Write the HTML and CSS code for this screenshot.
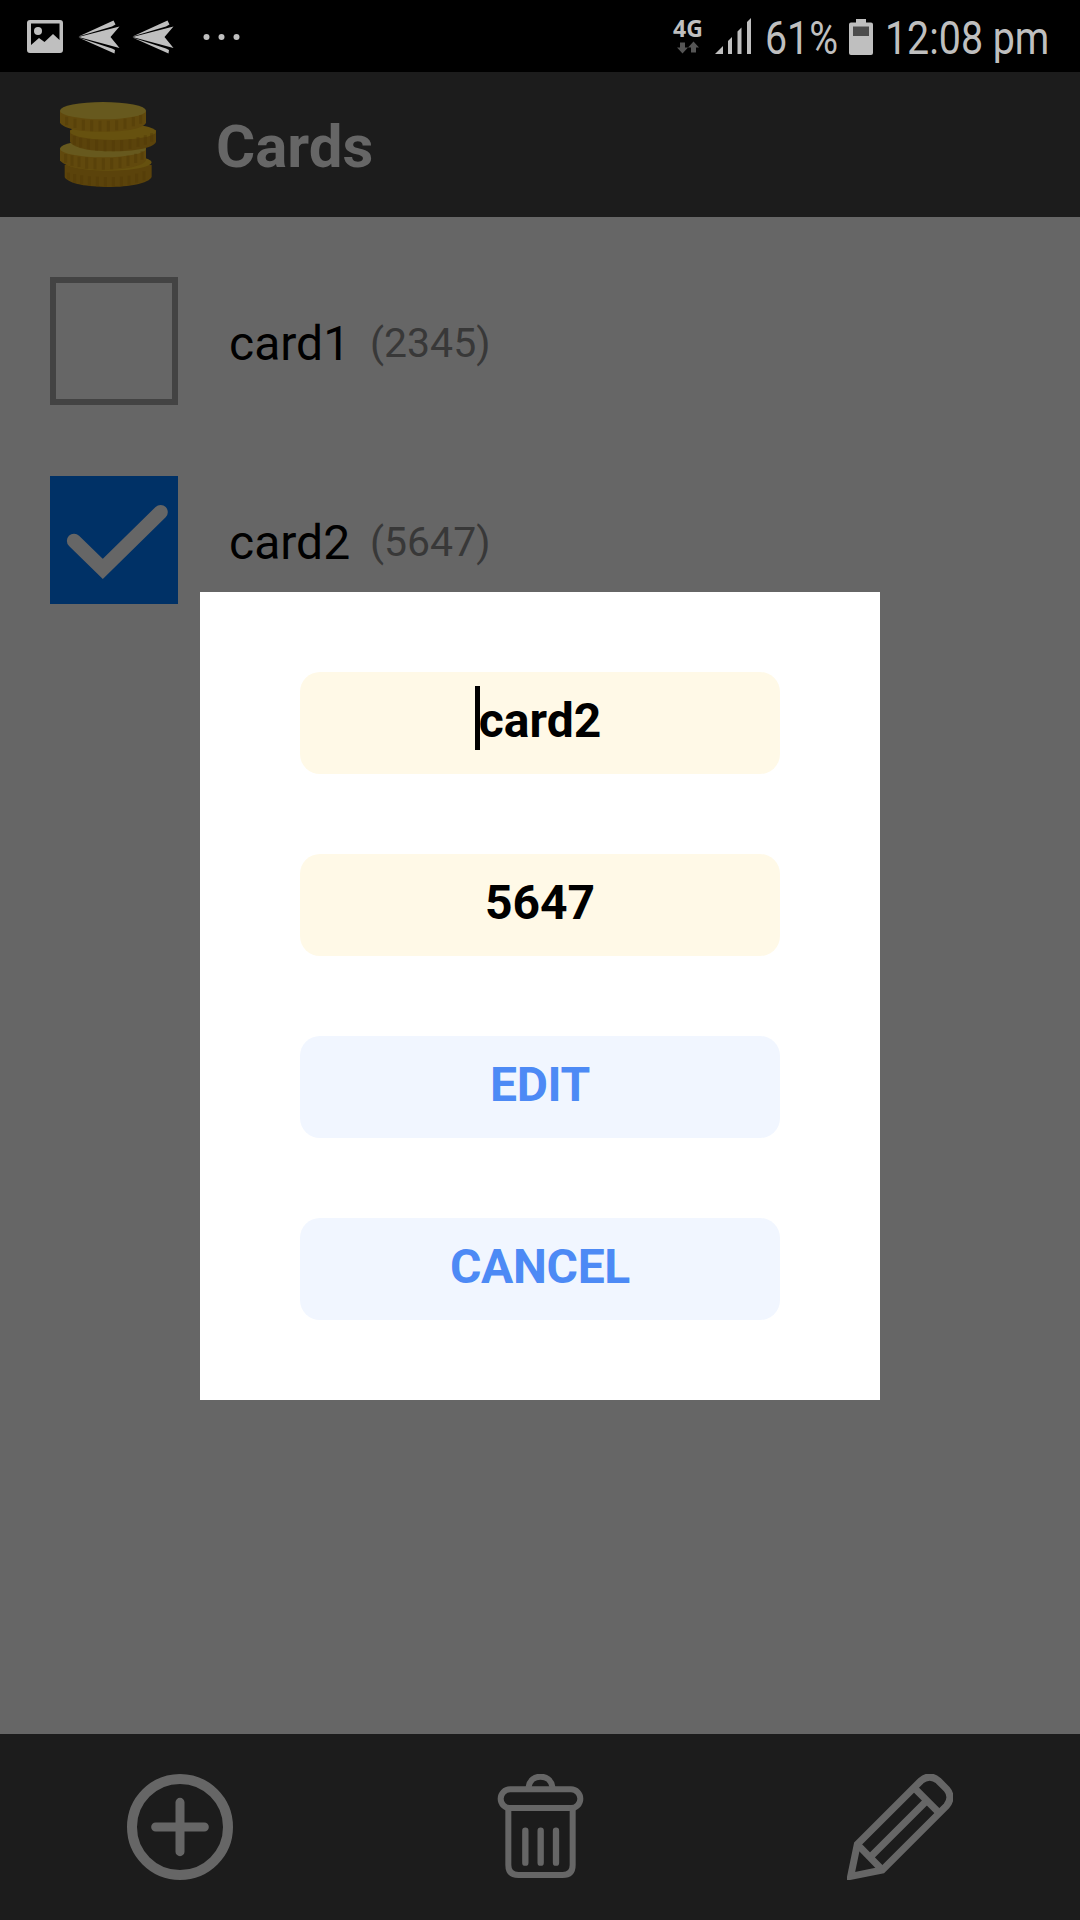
FILE: index.html
```html
<!DOCTYPE html>
<html lang="en">
<head>
<meta charset="utf-8">
<title>Cards</title>
<link rel="stylesheet" href="styles.css">
</head>
<body>
<div class="screen">
  <div class="status">
    <div class="status-left">
      <svg class="notices" viewBox="0 0 240 72">
        <path fill-rule="evenodd" d="M30 20h30q3 0 3 3v27q0 3-3 3H30q-3 0-3-3V23q0-3 3-3zM31 23.500V45l8-7 5.500 4 8.500-8 6.500 6V23.500z"/>
        <circle cx="38" cy="31" r="4"/>
        <g id="plane">
          <path d="M78.500 36.500L113.500 20.500L115.500 24.500L112 26.500z"/>
          <path d="M78.500 37L119.500 26.500L110.500 37L119.500 48L112 46z"/>
          <path d="M78.500 37.500L112 48.500L115 50L114.500 53.500z"/>
        </g>
        <use href="#plane" x="54"/>
        <circle cx="206.500" cy="37" r="3"/><circle cx="221.500" cy="37" r="3"/><circle cx="236.500" cy="37" r="3"/>
      </svg>
    </div>
    <div class="status-right">
      <div class="network">
        <span class="network-type">4G</span>
        <svg class="arrows" viewBox="0 0 22 12"><path d="M3 1h5v5h3L5.500 12L0 6h3zM14 11h5V6h3L16.500 0L11 6h3z"/></svg>
      </div>
      <svg class="signal" viewBox="0 0 36 36"><path d="M0 36l8-8v8zM13 36V23l4-4v17zM22.500 36V13.500l4-4V36zM32 36V4l4-4v36z"/></svg>
      <span class="percent"><span class="narrow">61%</span></span>
      <svg class="battery" viewBox="0 0 24 36"><path d="M7 0h10v3.500h5q2 0 2 2V34q0 2-2 2H2q-2 0-2-2V5.500q0-2 2-2h5z"/><path class="battery-empty" d="M4 7.500h16V17H4z"/></svg>
      <span class="clock"><span class="narrow">12:08 pm</span></span>
    </div>
  </div>

  <header class="header">
    <svg class="coins" viewBox="60 66 288 255">
      <path class="edge-low" d="M74 255v37c12 20 68 29 131 29s120-10 130-30v-36z"/>
      <ellipse class="face-low" cx="205" cy="247" rx="130" ry="25"/>
      <path class="ridge" d="M85 278v20M104 282v26M125 286v27M148 289v29M172 290v30M196 291v30M220 291v30M244 290v28M267 287v27M290 281v27M312 274v27"/>
      <path class="edge-high" d="M60 205v36c12 20 68 29 129 29s120-10 129-29v-36z"/>
      <ellipse class="face-high" cx="189" cy="206" rx="129" ry="26"/>
      <path class="ridge" d="M77 222v26M96 226v31M117 230v31M140 232v34M165 234v34M190 235v34M215 234v34M240 232v32M264 227v31M287 221v28M306 214v25"/>
      <path class="edge-low" d="M90 150v36c12 20 68 28 129 28s120-9 129-28v-36z"/>
      <ellipse class="face-low" cx="219" cy="155" rx="129" ry="25"/>
      <path class="ridge" d="M103 168v26M122 174v28M145 177v31M170 179v33M195 181v33M220 181v33M245 180v33M270 177v30M294 171v29M316 166v28M335 160v25"/>
      <path class="edge-high" d="M60 92v36c12 20 68 27 129 27s120-8 129-27V92z"/>
      <ellipse class="face-high" cx="189" cy="92" rx="129" ry="26"/>
      <path class="ridge" d="M80 110v26M105 116v28M130 119v32M155 121v33M180 122v32M205 122v32M230 121v30M255 116v30M280 111v28M302 105v26"/>
    </svg>
    <h1 class="title">Cards</h1>
  </header>

  <main class="list">
    <div class="row">
      <span class="box"></span>
      <span class="name">card1</span>
      <span class="digits">(2345)</span>
    </div>
    <div class="row">
      <span class="box checked"><svg class="tick" viewBox="62 650 383 383"><path d="M134 844L220 928L393 758"/></svg></span>
      <span class="name">card2</span>
      <span class="digits">(5647)</span>
    </div>
  </main>

  <footer class="toolbar">
    <svg class="tool" viewBox="81 162 318 318"><g stroke-width="30"><circle cx="240" cy="321" r="144"/><path stroke-width="27" d="M167 321h146M240 247v148"/></g></svg>
    <svg class="tool" viewBox="81 162 318 318"><g stroke-width="18"><path d="M206 200c6-40 65-40 71 0"/><rect x="122" y="208" width="239" height="56" rx="28"/><path d="M145 264v171q0 30 30 30h133q30 0 30-30V264"/><path stroke-width="19" d="M196 332v96M242 332v96M288 332v96"/></g></svg>
    <svg class="tool" viewBox="81 162 318 318"><g class="mitre" stroke-width="21"><path d="M112 373L303 182Q329 160 355 182L380 207Q400 231 380 257L187 450L92 469z"/><path d="M112 373L187 450M151 411L320 242M283 204L357 278"/></g></svg>
  </footer>

  <div class="overlay">
    <div class="dialog">
      <div class="field"><span class="value">card2<i class="caret"></i></span></div>
      <div class="field">5647</div>
      <div class="field action">EDIT</div>
      <div class="field action">CANCEL</div>
    </div>
  </div>
</div>
</body>
</html>
```
FILE: styles.css
```css
* { box-sizing: border-box; }
body { margin: 0; background: #666; font-family: Roboto, sans-serif; }
svg { display: block; flex: none; }

.screen {
  position: relative;
  display: flex;
  flex-direction: column;
  width: 1080px;
  height: 1920px;
  overflow: hidden;
}

.status {
  display: flex;
  justify-content: space-between;
  flex: none;
  height: 72px;
  background: #000;
  color: #bfbfbf;
  fill: #bfbfbf;
}
.notices { width: 240px; height: 72px; }
.status-right {
  display: flex;
  align-items: flex-start;
  padding-right: 30px;
}
.network {
  display: flex;
  flex-direction: column;
  align-items: center;
  width: 30px;
  margin: 17px 12px 0 0;
}
.network-type { font: bold 23px/22px "Noto Sans", sans-serif; }
.arrows { width: 22px; height: 13px; margin-top: 2px; fill: #555; }
.signal { width: 36px; height: 36px; margin-top: 18px; }
.percent, .clock { margin-top: 3px; font-size: 45.5px; line-height: 72px; white-space: nowrap; }
.percent { width: 72px; margin-left: 14px; }
.clock { width: 165px; margin-left: 12px; }
.narrow { display: inline-block; transform: scaleX(.865); transform-origin: 0 50%; }
.battery { width: 24px; height: 36px; margin: 19px 0 0 12px; }
.battery-empty { fill: #4d4d4d; }

.header {
  display: flex;
  align-items: center;
  flex: none;
  height: 145px;
  padding-left: 60px;
  background: #1c1c1c;
}
.coins { width: 96px; height: 85px; }
.edge-low { fill: #5b430b; }
.edge-high { fill: #61490d; }
.face-low { fill: #66510f; }
.face-high { fill: #67591e; }
.ridge { fill: none; stroke: #503a06; stroke-width: 9; opacity: .45; }
.title { margin: 0 0 0 60px; padding-top: 4px; color: #666; font-size: 60px; font-weight: 700; line-height: 70px; }

.list {
  display: flex;
  flex-direction: column;
  gap: 71px;
  flex: 1;
  padding: 60px 50px 0;
}
.row { display: flex; align-items: center; height: 128px; }
.box { width: 128px; height: 128px; border: 6px solid #434343; }
.checked { border: 0; background: #003166; }
.tick { width: 128px; height: 128px; fill: none; stroke: #666; stroke-width: 43; stroke-linecap: round; }
.name { width: 123px; margin-left: 51px; padding-top: 5px; color: #000; font-size: 48px; }
.digits { margin-left: 18px; padding-top: 3px; color: #383838; font-size: 41px; }

.toolbar {
  display: grid;
  grid-template-columns: repeat(3, 1fr);
  place-items: center;
  flex: none;
  height: 186px;
  background: #1c1c1c;
}
.tool { width: 106px; height: 106px; fill: none; stroke: #666; stroke-linecap: round; stroke-linejoin: round; }
.mitre { stroke-linecap: butt; stroke-linejoin: miter; }

.overlay {
  position: absolute;
  inset: 72px 0 0;
  display: flex;
  align-items: center;
  justify-content: center;
}
.dialog {
  display: flex;
  flex-direction: column;
  gap: 80px;
  width: 680px;
  padding: 80px 100px;
  background: #fff;
}
.field {
  display: flex;
  justify-content: center;
  height: 102px;
  border-radius: 20px;
  background: #fff9e7;
  color: #000;
  font-size: 48px;
  font-weight: 700;
  line-height: 98px;
}
.action { background: #f1f6ff; color: #4d8af5; letter-spacing: -.3px; }
.value { position: relative; }
.caret { position: absolute; top: 14px; left: -4px; width: 5px; height: 64px; background: #000; }
```
